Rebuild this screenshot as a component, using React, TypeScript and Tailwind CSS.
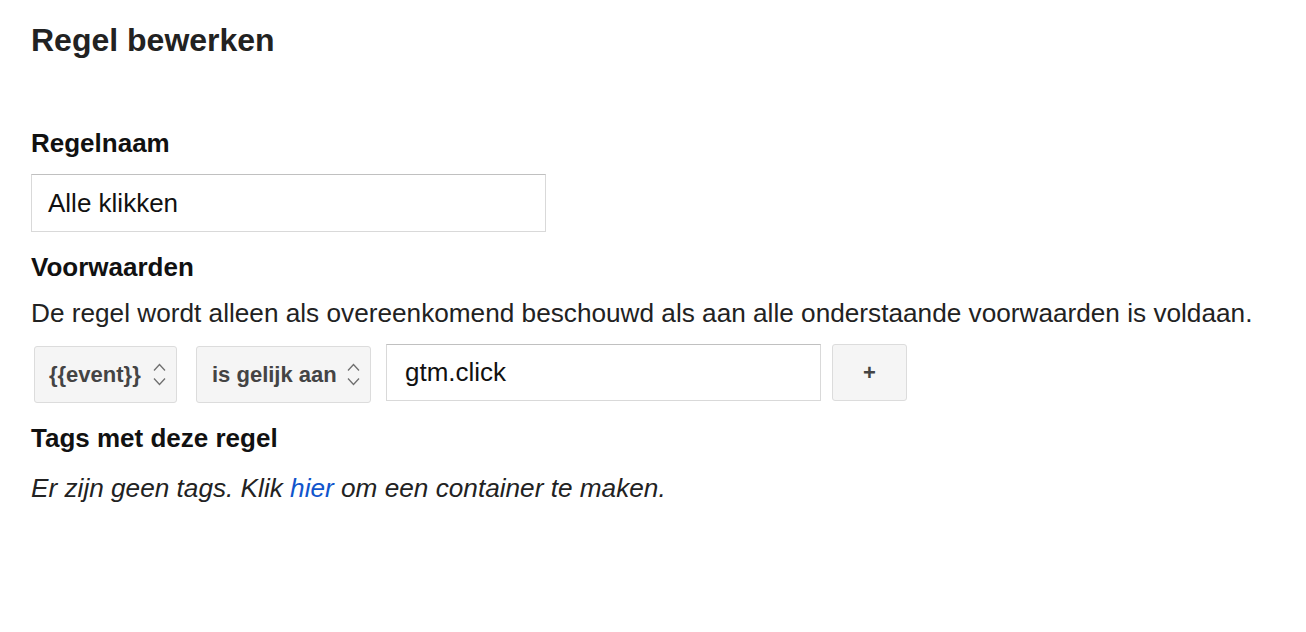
import React from 'react';

function Chevrons() {
  return (
    <svg width="13" height="23" viewBox="0 0 13 23" fill="none" stroke="#6f6f6f" strokeWidth="1.3" className="shrink-0">
      <path d="M1 7.5 L6.5 1.5 L12 7.5" />
      <path d="M1 15.5 L6.5 21.5 L12 15.5" />
    </svg>
  );
}

function SelectBox({ label, width, className }: { label: string; width: string; className?: string }) {
  return (
    <div
      className={`${width} ${className ?? ''} h-[57px] flex items-center justify-between pl-[14px] pr-[10px] bg-[#f5f5f5] border border-[#dcdcdc] rounded-[3px] text-[22px] font-bold text-[#444] box-border`}
    >
      <span>{label}</span>
      <Chevrons />
    </div>
  );
}

export default function App() {
  return (
    <div className="min-h-[632px] w-[1306px] bg-white text-[#222] px-[31px] pt-[20px] font-['Liberation_Sans',Arial,sans-serif]">
      {/* Page title */}
      <h1 className="text-[32px] leading-[40px] font-bold text-[#222]">Regel bewerken</h1>

      {/* Rule name */}
      <h2 className="mt-[67px] text-[26px] leading-[32px] font-bold text-[#111]">Regelnaam</h2>
      <div className="mt-[15px] w-[515px] h-[58px] box-border border border-[#d9d9d9] border-t-[#c0c0c0] pl-[16px] flex items-center text-[26px] text-[#111]">
        Alle klikken
      </div>

      {/* Conditions */}
      <h2 className="mt-[19px] text-[26px] leading-[32px] font-bold text-[#111]">Voorwaarden</h2>
      <p className="mt-[14px] text-[26.2px] leading-[32px] text-[#222] whitespace-nowrap">
        De regel wordt alleen als overeenkomend beschouwd als aan alle onderstaande voorwaarden is voldaan.
      </p>

      <div className="mt-[15px] flex items-start">
        <SelectBox label="{{event}}" width="w-[143px]" className="ml-[3px] mt-[2px]" />
        <SelectBox label="is gelijk aan" width="w-[175px]" className="ml-[19px] mt-[2px] pl-[15px]" />
        <div className="ml-[15px] w-[435px] h-[57px] box-border border border-[#d9d9d9] border-t-[#c0c0c0] pl-[18px] flex items-center text-[26px] text-[#111]">
          gtm.click
        </div>
        <button className="ml-[11px] w-[75px] h-[57px] box-border bg-[#f5f5f5] border border-[#dcdcdc] rounded-[3px] text-[22px] font-bold text-[#444] flex items-center justify-center">
          +
        </button>
      </div>

      {/* Tags */}
      <h2 className="mt-[19px] text-[26px] leading-[32px] font-bold text-[#111]">Tags met deze regel</h2>
      <p className="mt-[18px] text-[26.2px] leading-[32px] italic text-[#222]">
        Er zijn geen tags. Klik <a className="text-[#1155cc] cursor-pointer">hier</a> om een container te maken.
      </p>
    </div>
  );
}
